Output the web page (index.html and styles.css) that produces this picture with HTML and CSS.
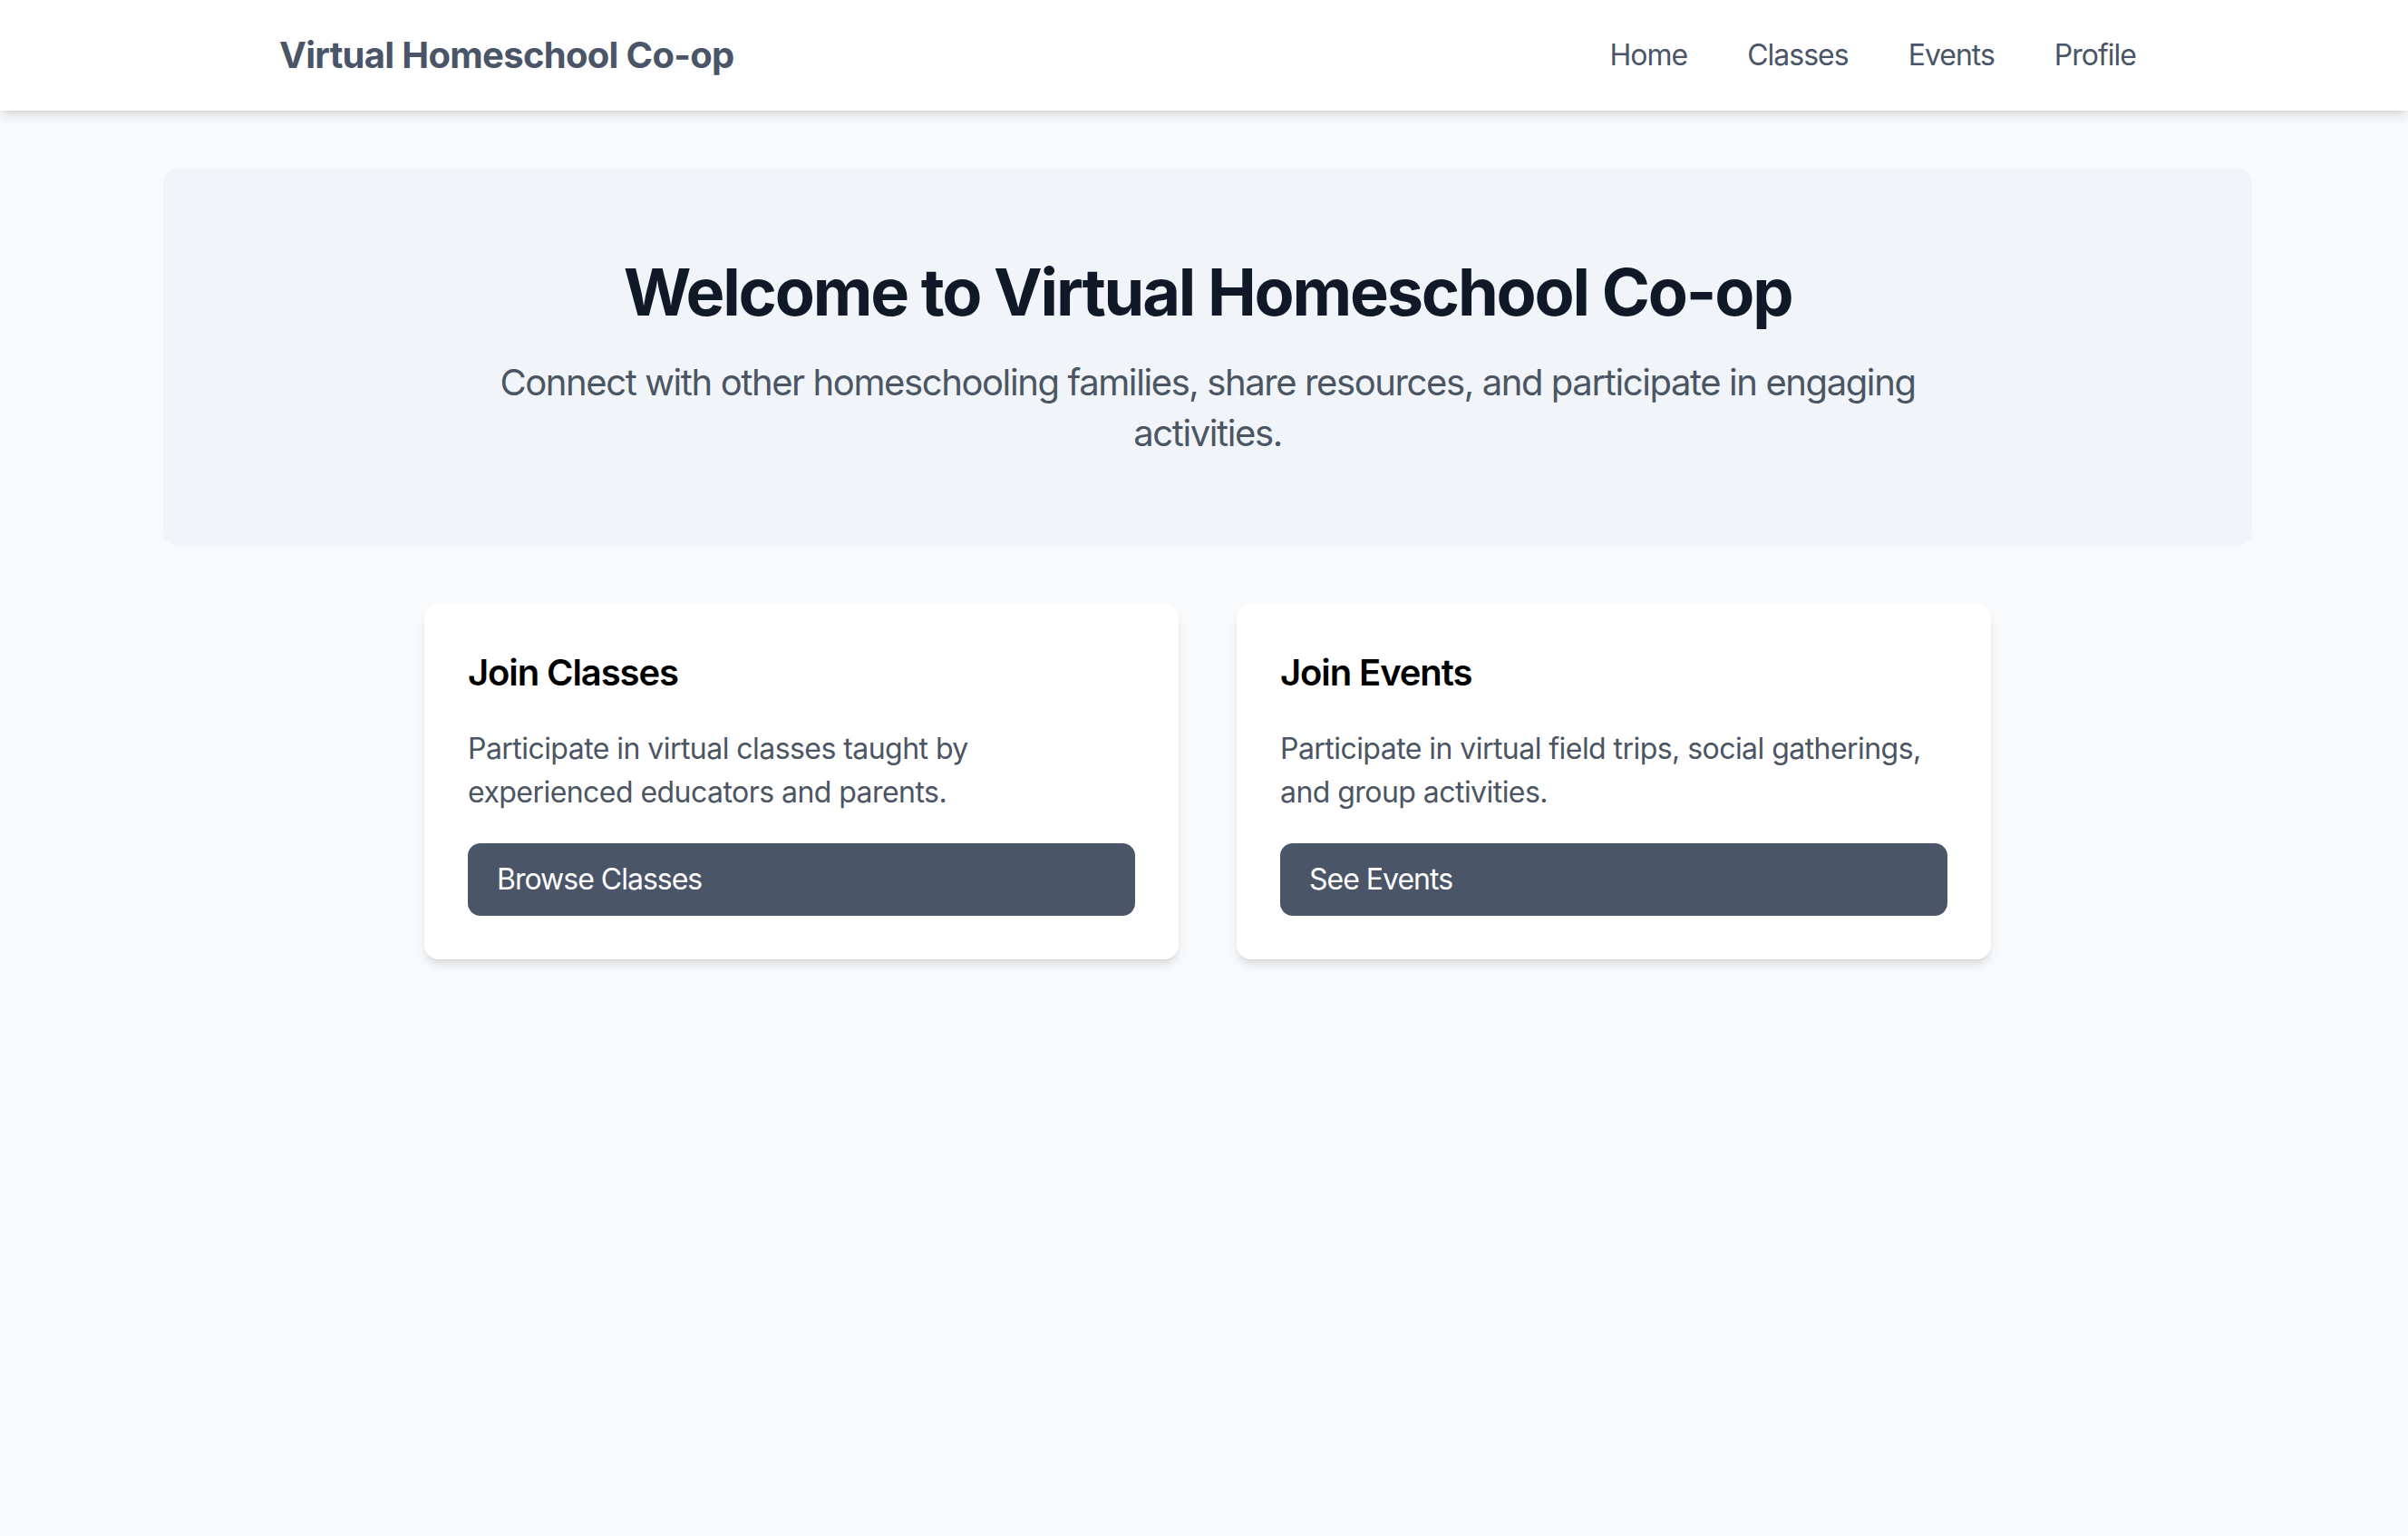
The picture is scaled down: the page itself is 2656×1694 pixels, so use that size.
FILE: index.html
```html
<!DOCTYPE html>
<html lang="en">
<head>
<meta charset="utf-8">
<title>Virtual Homeschool Co-op</title>
<link rel="stylesheet" href="styles.css">
</head>
<body>
<header class="site-header">
  <div class="header-inner">
    <a class="logo" href="#">Virtual Homeschool Co-op</a>
    <nav class="nav">
      <a href="#">Home</a>
      <a href="#">Classes</a>
      <a href="#">Events</a>
      <a href="#">Profile</a>
    </nav>
  </div>
</header>
<main class="main">
  <section class="hero">
    <h1 class="hero-title">Welcome to Virtual Homeschool Co-op</h1>
    <p class="hero-sub">Connect with other homeschooling families, share resources, and participate in engaging activities.</p>
  </section>
  <section class="cards">
    <div class="card">
      <h2 class="card-title">Join Classes</h2>
      <p class="card-text">Participate in virtual classes taught by experienced educators and parents.</p>
      <button class="card-btn">Browse Classes</button>
    </div>
    <div class="card">
      <h2 class="card-title">Join Events</h2>
      <p class="card-text">Participate in virtual field trips, social gatherings, and group activities.</p>
      <button class="card-btn">See Events</button>
    </div>
  </section>
</main>
</body>
</html>
```
FILE: styles.css
```css
* { box-sizing: border-box; }
html, body { margin: 0; padding: 0; }
body {
  background: #f8fafc;
  font-family: Inter, "Noto Sans", sans-serif;
  min-height: 1694px;
  padding-left: 8px;
}
.site-header {
  background: #ffffff;
  height: 122px;
  margin-left: -8px;
  padding-left: 8px;
  box-shadow: 0 8px 12px -2px rgba(0,0,0,0.1), 0 4px 8px -4px rgba(0,0,0,0.1);
  position: relative;
  z-index: 1;
}
.header-inner {
  width: 2048px;
  margin: 0 auto;
  height: 100%;
  display: flex;
  align-items: center;
  justify-content: space-between;
}
.logo {
  font-size: 40px;
  line-height: 56px;
  font-weight: 700;
  letter-spacing: -0.7px;
  color: #4a5568;
  text-decoration: none;
}
.nav {
  display: flex;
  gap: 66px;
}
.nav a {
  font-size: 32px;
  line-height: 48px;
  letter-spacing: -1px;
  color: #4a5568;
  text-decoration: none;
}
.main {
  padding: 64px 0;
}
.hero {
  max-width: 2304px;
  margin: 0 auto;
  background: #f1f5f9;
  border-radius: 16px;
  padding: 96px 32px;
  text-align: center;
}
.hero-title {
  margin: 0 0 32px;
  font-size: 72px;
  line-height: 80px;
  font-weight: 700;
  letter-spacing: -2.2px;
  color: #111827;
}
.hero-sub {
  margin: 0 auto;
  max-width: 1610px;
  font-size: 40px;
  line-height: 56px;
  letter-spacing: -1.4px;
  color: #4b5563;
}
.cards {
  max-width: 1792px;
  margin: 64px auto 0;
  padding: 0 32px;
  display: grid;
  grid-template-columns: 1fr 1fr;
  gap: 64px;
}
.card {
  background: #ffffff;
  border-radius: 16px;
  padding: 48px;
  box-shadow: 0 8px 12px -2px rgba(0,0,0,0.1), 0 4px 8px -4px rgba(0,0,0,0.1);
}
.card-title {
  margin: 0 0 32px;
  font-size: 40px;
  line-height: 56px;
  font-weight: 600;
  letter-spacing: -1.1px;
  color: #000000;
}
.card-text {
  margin: 0 0 32px;
  font-size: 32px;
  line-height: 48px;
  letter-spacing: -0.55px;
  color: #4b5563;
}
.card-btn {
  display: block;
  width: 100%;
  border: none;
  background: #4a5568;
  color: #ffffff;
  font-family: inherit;
  font-size: 32px;
  line-height: 48px;
  letter-spacing: -1px;
  padding: 16px 32px;
  border-radius: 14px;
  text-align: left;
  cursor: pointer;
}
```
